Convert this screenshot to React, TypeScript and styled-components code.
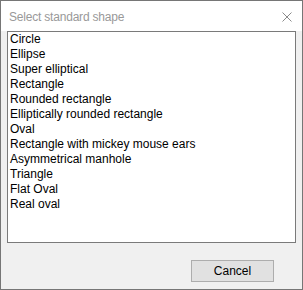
import React from 'react';
import styled, {createGlobalStyle} from 'styled-components';

const GlobalStyle = createGlobalStyle`
  html, body {
    margin: 0;
    padding: 0;
    background: #f0f0f0;
  }
`;

const Window = styled.div`
  width: 303px;
  height: 290px;
  box-sizing: border-box;
  border: 1px solid #767676;
  background: #f0f0f0;
  display: flex;
  flex-direction: column;
  font-family: "Liberation Sans", Arial, sans-serif;
`;

const TitleBar = styled.div`
  height: 30px;
  background: #ffffff;
  display: flex;
  align-items: center;
  justify-content: space-between;
  padding: 0 10px 0 8px;
`;

const Title = styled.span`
  font-size: 12px;
  letter-spacing: -0.2px;
  color: #999999;
  margin-top: 1px;
`;

const CloseIcon = styled.svg`
  width: 10px;
  height: 10px;
  margin-top: 1px;
`;

const Body = styled.div`
  flex: 1;
  display: flex;
  flex-direction: column;
  padding: 0 6px;
`;

const ListBox = styled.ul`
  list-style: none;
  margin: 0;
  padding: 0 2px;
  height: 212px;
  box-sizing: border-box;
  border: 1px solid #7a7a7a;
  background: #ffffff;
`;

const Item = styled.li`
  font-size: 12px;
  line-height: 15px;
  color: #000000;
  white-space: nowrap;
`;

const Footer = styled.div`
  display: flex;
  justify-content: flex-end;
  padding: 17px 22px 0 0;
`;

const Button = styled.button`
  width: 83px;
  height: 22px;
  box-sizing: border-box;
  border: 1px solid #adadad;
  background: #e1e1e1;
  font-family: inherit;
  font-size: 12px;
  color: #000000;
  padding: 0;
`;

const shapes = [
    "Circle",
    "Ellipse",
    "Super elliptical",
    "Rectangle",
    "Rounded rectangle",
    "Elliptically rounded rectangle",
    "Oval",
    "Rectangle with mickey mouse ears",
    "Asymmetrical manhole",
    "Triangle",
    "Flat Oval",
    "Real oval",
];

const App = () => (
    <>
        <GlobalStyle/>
        <Window>
            <TitleBar>
                <Title>Select standard shape</Title>
                <CloseIcon viewBox="0 0 10 10">
                    <path d="M0.5 0.5 L9.5 9.5 M9.5 0.5 L0.5 9.5" stroke="#8a8a8a" strokeWidth="1"/>
                </CloseIcon>
            </TitleBar>
            <Body>
                <ListBox>
                    {shapes.map((shape) => (
                        <Item key={shape}>{shape}</Item>
                    ))}
                </ListBox>
                <Footer>
                    <Button>Cancel</Button>
                </Footer>
            </Body>
        </Window>
    </>
);

export default App;
